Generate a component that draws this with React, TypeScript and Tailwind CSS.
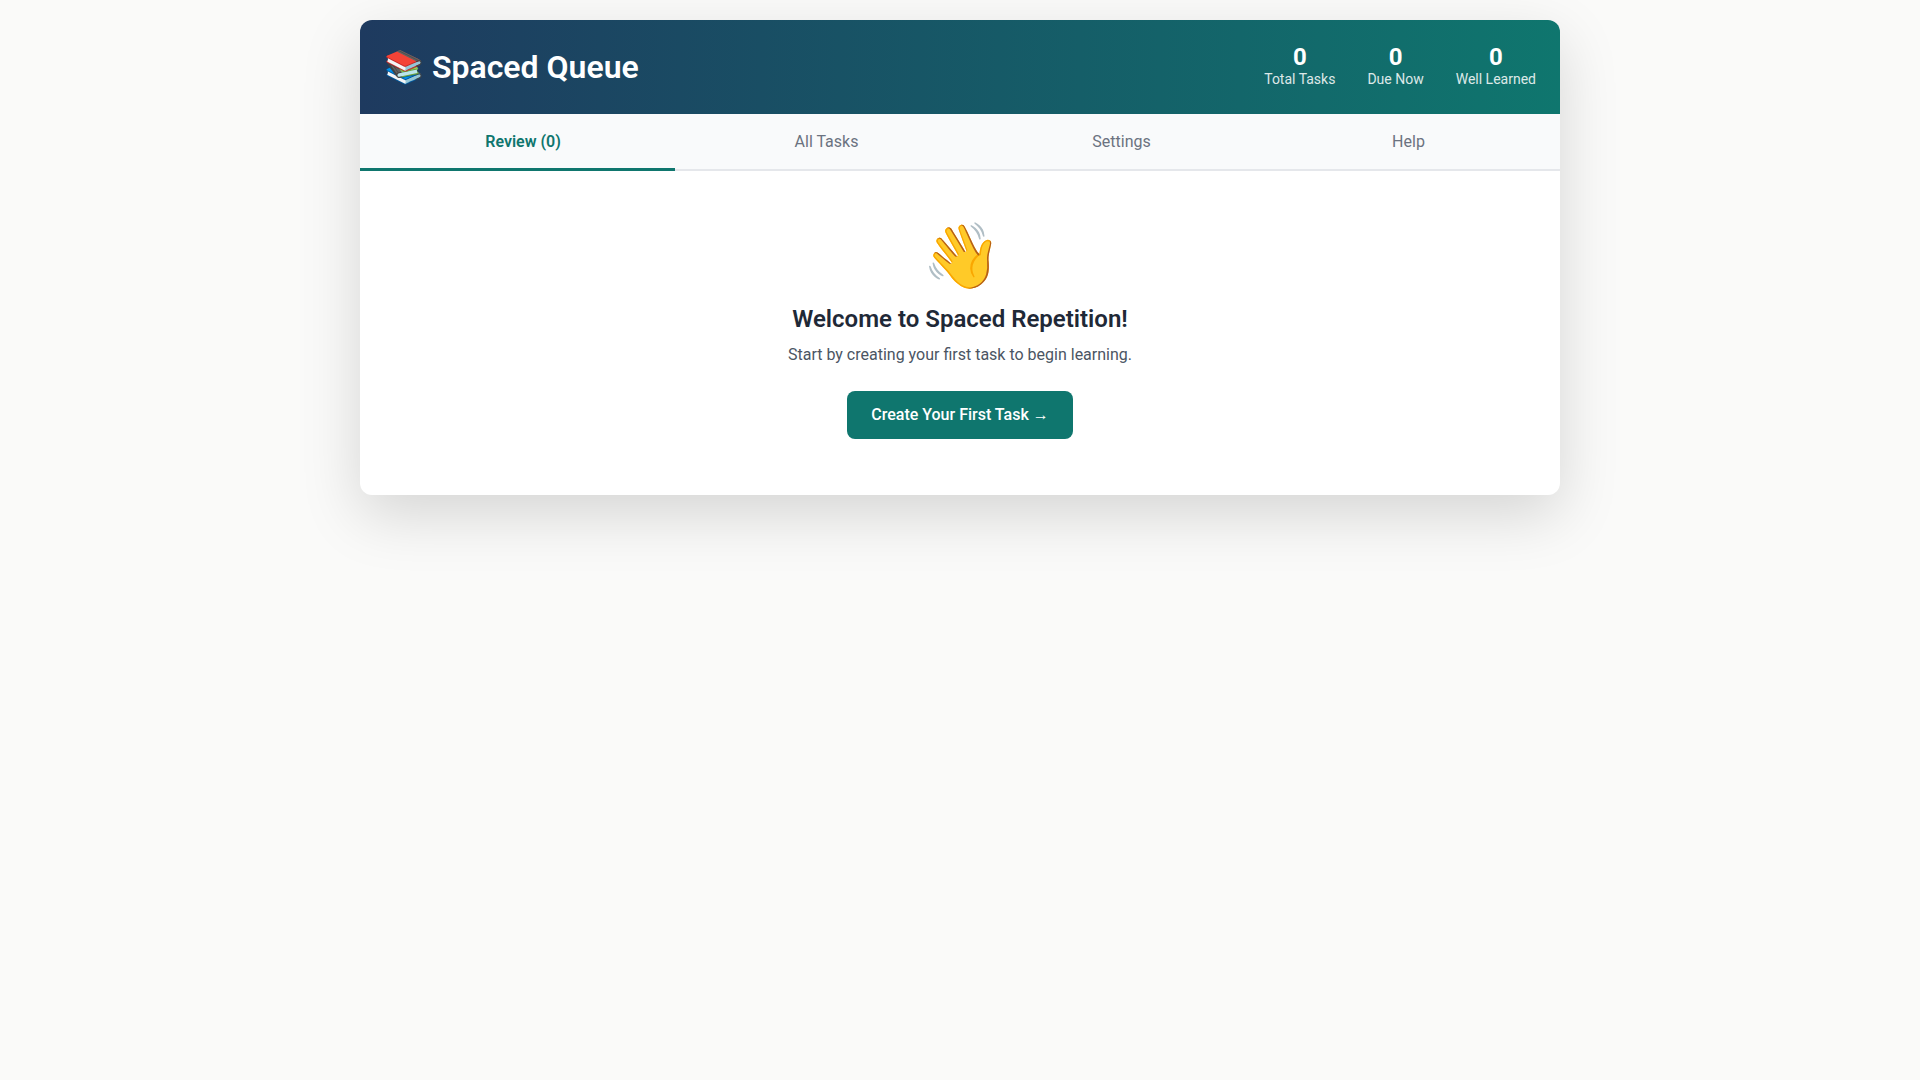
export default function App() {
  return (
    <div className="min-h-screen bg-[#fafaf9] pt-5 font-['Roboto',sans-serif]">
      <div className="mx-auto w-[1200px] overflow-hidden rounded-xl bg-white shadow-[0_20px_60px_rgba(0,0,0,0.15)]">
        {/* Header */}
        <header className="flex h-[94px] items-center justify-between bg-[linear-gradient(90deg,#1e3a5f,#0f766e)] px-6 text-white">
          <h1 className="text-[32px] font-semibold">📚 Spaced Queue</h1>
          <div className="flex gap-8 pb-0.5">
            <Stat value="0" label="Total Tasks" />
            <Stat value="0" label="Due Now" />
            <Stat value="0" label="Well Learned" />
          </div>
        </header>

        {/* Tabs */}
        <nav className="flex h-[57px] border-b-2 border-[#e5e7eb] bg-[#f9fafb] text-base text-[#6b7280]">
          <button className="-mb-0.5 w-[315px] border-b-[3px] border-[#0f766e] pt-px pl-[11px] font-semibold text-[#0f766e]">
            Review (0)
          </button>
          <button className="w-[303px]">All Tasks</button>
          <button className="w-[287px]">Settings</button>
          <button className="w-[295px] pr-[8px]">Help</button>
        </nav>

        {/* Empty state */}
        <main className="flex flex-col items-center px-6 pt-12 pb-14 text-center">
          <div className="pl-1 text-[64px] leading-[76px]">👋</div>
          <h2 className="mt-2 text-2xl font-semibold text-[#1f2937]">
            Welcome to Spaced Repetition!
          </h2>
          <p className="mt-2 text-base text-[#4b5563]">
            Start by creating your first task to begin learning.
          </p>
          <button className="mt-6 h-12 rounded-lg bg-[#0f766e] px-6 text-base font-medium text-white">
            Create Your First Task →
          </button>
        </main>
      </div>
    </div>
  );
}

function Stat({ value, label }: { value: string; label: string }) {
  return (
    <div className="text-center">
      <div className="text-2xl leading-[26px] font-bold">{value}</div>
      <div className="text-sm leading-[18px] opacity-85">{label}</div>
    </div>
  );
}
